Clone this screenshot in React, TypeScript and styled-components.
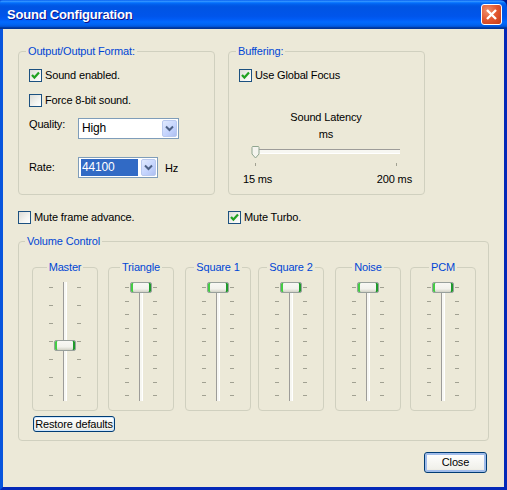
import React, { FC } from "react";
import styled, { createGlobalStyle } from "styled-components";

const GlobalStyle = createGlobalStyle`
  html, body {
    margin: 0;
    padding: 0;
    background: #fff;
    overflow: hidden;
  }
  body {
    font-family: "Liberation Sans", Tahoma, Arial, sans-serif;
    font-size: 11px;
    line-height: 13px;
    letter-spacing: -0.15px;
    color: #000;
  }
`;

const Window = styled.div`
  width: 507px;
  height: 490px;
  display: flex;
  flex-direction: column;
  box-sizing: border-box;
  background: linear-gradient(90deg, #0a55e0 0%, #0a55e0 60%, #00188c 100%);
`;

const TitleBar = styled.div`
  height: 29px;
  flex: none;
  display: flex;
  align-items: center;
  justify-content: space-between;
  padding: 0 5px 0 7px;
  border-radius: 3px 7px 0 0;
  background: linear-gradient(
    180deg,
    #0058ee 0%,
    #3593ff 4%,
    #288eff 6%,
    #127dff 8%,
    #036ffc 10%,
    #0262ee 14%,
    #0057e5 20%,
    #0054e3 24%,
    #0055eb 56%,
    #005bf5 66%,
    #026afe 76%,
    #0062ef 86%,
    #0052d6 92%,
    #0040ab 94%,
    #003092 100%
  );
`;

const TitleText = styled.span`
  font-size: 13px;
  font-weight: 700;
  letter-spacing: -0.2px;
  color: #fff;
  text-shadow: 1px 1px 0 #0f1089;
`;

const CloseBox = styled.div`
  width: 21px;
  height: 21px;
  box-sizing: border-box;
  display: flex;
  align-items: center;
  justify-content: center;
  border: 1px solid #fff;
  border-radius: 3px;
  background: radial-gradient(circle at 30% 30%, #f0906c 0%, #e2562f 50%, #c23a17 100%);
`;

const Client = styled.div`
  flex: 1;
  display: flex;
  flex-direction: column;
  box-sizing: border-box;
  padding: 16px 15px 0 15px;
  background: #ece9d8;
  border-left: 3px solid #0855dd;
  border-right: 3px solid #0428b8;
  border-bottom: 3px solid #0428b8;
`;

const TopRow = styled.div`
  display: flex;
  gap: 13px;
`;

const Group = styled.fieldset<{ $w: number; $h: number }>`
  margin: 0;
  min-width: 0;
  box-sizing: border-box;
  width: ${(p) => p.$w}px;
  height: ${(p) => p.$h}px;
  border: 1px solid #d0d0bf;
  border-radius: 4px;
  padding: 0;
`;

const Legend = styled.legend<{ $ml: number }>`
  margin-left: ${(p) => p.$ml}px;
  padding: 0 2px;
  color: #0046d5;
  line-height: 13px;
`;

const OutputBody = styled.div`
  display: flex;
  flex-direction: column;
  padding: 11px 0 0 10px;
`;

const CheckRow = styled.label<{ $mb?: number }>`
  display: flex;
  align-items: center;
  gap: 3px;
  height: 13px;
  margin-bottom: ${(p) => p.$mb ?? 0}px;
`;

const CheckBoxFrame = styled.span`
  width: 13px;
  height: 13px;
  flex: none;
  box-sizing: border-box;
  display: flex;
  align-items: center;
  justify-content: center;
  border: 1px solid #1c5180;
  background: linear-gradient(135deg, #dcdcd7 0%, #f4f4f0 60%, #fff 100%);
`;

const FormRow = styled.div<{ $h: number; $mb?: number }>`
  display: flex;
  height: ${(p) => p.$h}px;
  margin-bottom: ${(p) => p.$mb ?? 0}px;
`;

const FieldLabel = styled.span<{ $top: number }>`
  width: 49px;
  flex: none;
  padding-top: ${(p) => p.$top}px;
`;

const Select = styled.div<{ $w: number; $h: number }>`
  width: ${(p) => p.$w}px;
  height: ${(p) => p.$h}px;
  box-sizing: border-box;
  display: flex;
  align-items: center;
  justify-content: space-between;
  padding: 1px 1px 1px 2px;
  background: #fff;
  border: 1px solid #7f9db9;
`;

const SelectValue = styled.span<{ $selected?: boolean }>`
  flex: 1;
  height: 100%;
  display: flex;
  align-items: center;
  padding-left: 1px;
  margin-right: 3px;
  font-size: 12px;
  color: ${(p) => (p.$selected ? "#fff" : "#000")};
  background: ${(p) => (p.$selected ? "#316ac5" : "transparent")};
`;

const SelectArrow = styled.span`
  width: 15px;
  height: 100%;
  flex: none;
  display: flex;
  align-items: center;
  justify-content: center;
  border-radius: 2px;
  border: 1px solid #b9c9ef;
  box-sizing: border-box;
  background: linear-gradient(135deg, #e1eafe 0%, #c3d3fd 60%, #aebff0 100%);
`;

const Unit = styled.span`
  margin-left: 7px;
  padding-top: 5px;
`;

const BufferBody = styled.div`
  display: flex;
  flex-direction: column;
  padding: 11px 0 0 10px;
`;

const LatencyBlock = styled.div`
  display: flex;
  flex-direction: column;
  align-items: center;
  width: 176px;
  margin: 29px 0 0 -1px;
  gap: 4px;
`;

const HSlider = styled.div`
  position: relative;
  width: 176px;
  margin-top: 1px;
  padding: 3px 14px 0 15px;
  box-sizing: border-box;
`;

const HTrack = styled.div`
  height: 3px;
  background: #f7f7f2;
  border-top: 1px solid #9d9c99;
  border-bottom: 1px solid #fff;
`;

const HThumb = styled.svg`
  position: absolute;
  left: 13px;
  top: 0;
`;

const HTicks = styled.div`
  display: flex;
  justify-content: space-between;
  padding: 9px 3px 0 2px;
`;

const HTick = styled.span`
  width: 1px;
  height: 3px;
  background: #a1a192;
`;

const HLabels = styled.div`
  display: flex;
  justify-content: space-between;
  margin-top: 3px;
  width: 100%;
  box-sizing: border-box;
  padding: 0 2px 0 5px;
`;

const MuteRow = styled.div`
  display: flex;
  margin: 16px 0 11px 0;
`;

const MuteCell = styled.div<{ $w: number }>`
  width: ${(p) => p.$w}px;
  flex: none;
`;

const VolumeBody = styled.div`
  padding: 0 0 0 13px;
`;

const Channels = styled.div`
  display: grid;
  grid-template-columns: 76px 77px 73px 77px 75px 66px;
  margin-top: 13px;
`;

const ChannelBox = styled.fieldset`
  margin: 0;
  padding: 0;
  width: 66px;
  min-width: 0;
  box-sizing: border-box;
  height: 150px;
  border: 1px solid #d0d0bf;
  border-radius: 4px;
`;

const ChannelLegend = styled.legend`
  margin: 0 auto;
  padding: 0 2px;
  color: #0046d5;
`;

const SliderWrap = styled.div`
  display: flex;
  justify-content: center;
  gap: 10px;
  height: 119px;
  padding: 8px 0 0 0;
  position: relative;
`;

const TickColumn = styled.div`
  display: flex;
  flex-direction: column;
  justify-content: space-between;
  height: 109px;
  margin-top: 5px;
`;

const VTick = styled.span`
  width: 4px;
  height: 1px;
  background: #a1a192;
`;

const VTrack = styled.div`
  width: 4px;
  height: 119px;
  box-sizing: border-box;
  background: #f7f7f2;
  border-left: 1px solid #9d9c99;
  border-right: 1px solid #fff;
`;

const VThumb = styled.div<{ $top: number }>`
  position: absolute;
  left: 21px;
  top: ${(p) => p.$top}px;
  width: 22px;
  height: 11px;
  box-sizing: border-box;
  border: 1px solid #98a09c;
  border-radius: 2px;
  background: linear-gradient(180deg, #f8f8f4 0%, #f2f2ec 65%, #d2d2c6 100%);
  box-shadow: inset 2px 0 0 #44cc44, inset -2px 0 0 #1f9a2b;
`;

const RestoreButton = styled.button`
  display: block;
  margin: 5px 0 0 1px;
  width: 82px;
  height: 16px;
  padding: 0;
  font: inherit;
  letter-spacing: inherit;
  white-space: nowrap;
  color: #000;
  border: 1px solid #003c74;
  border-radius: 3px;
  background: linear-gradient(180deg, #fff 0%, #f0f0ea 85%, #dcd8c8 100%);
  box-shadow: inset 0 0 0 1px #cee7ff;
`;

const Footer = styled.div`
  display: flex;
  justify-content: flex-end;
  margin-top: 11px;
  padding-right: 2px;
`;

const CloseButton = styled.button`
  width: 63px;
  height: 21px;
  padding: 0;
  font: inherit;
  letter-spacing: inherit;
  color: #000;
  border: 1px solid #003c74;
  border-radius: 3px;
  background: linear-gradient(180deg, #fff 0%, #f0f0ea 85%, #dcd8c8 100%);
  box-shadow: inset 0 0 0 2px #a0bcea;
`;

const CheckBox: FC<{ label: string; checked?: boolean; mb?: number }> = ({ label, checked, mb }) => (
  <CheckRow $mb={mb}>
    <CheckBoxFrame>
      {checked && (
        <svg width="9" height="9" viewBox="0 0 9 9">
          <path d="M1 4 L3.4 6.6 L8 1.6" fill="none" stroke="#21a121" strokeWidth="2.2" />
        </svg>
      )}
    </CheckBoxFrame>
    {label}
  </CheckRow>
);

const Chevron: FC = () => (
  <svg width="9" height="7" viewBox="0 0 9 7">
    <path d="M1 1.5 L4.5 5 L8 1.5" fill="none" stroke="#4d6185" strokeWidth="2" />
  </svg>
);

const CHANNELS = [
  { name: "Master", ticks: 7, top: 66 },
  { name: "Triangle", ticks: 9, top: 8 },
  { name: "Square 1", ticks: 9, top: 8 },
  { name: "Square 2", ticks: 9, top: 8 },
  { name: "Noise", ticks: 9, top: 8 },
  { name: "PCM", ticks: 9, top: 8 },
];

const Ticks: FC<{ count: number }> = ({ count }) => (
  <TickColumn>
    {Array.from({ length: count }, (_, i) => (
      <VTick key={i} />
    ))}
  </TickColumn>
);

export default function App() {
  return (
    <>
      <GlobalStyle />
      <Window>
        <TitleBar>
          <TitleText>Sound Configuration</TitleText>
          <CloseBox>
            <svg width="13" height="13" viewBox="0 0 13 13">
              <path d="M2 2 L11 11 M11 2 L2 11" stroke="#fff" strokeWidth="2.4" />
            </svg>
          </CloseBox>
        </TitleBar>
        <Client>
          <TopRow>
            <Group $w={197} $h={150}>
              <Legend $ml={7}>Output/Output Format:</Legend>
              <OutputBody>
                <CheckBox label="Sound enabled." checked mb={12} />
                <CheckBox label="Force 8-bit sound." mb={11} />
                <FormRow $h={21} $mb={18}>
                  <FieldLabel $top={0}>Quality:</FieldLabel>
                  <Select $w={101} $h={21}>
                    <SelectValue>High</SelectValue>
                    <SelectArrow>
                      <Chevron />
                    </SelectArrow>
                  </Select>
                </FormRow>
                <FormRow $h={21}>
                  <FieldLabel $top={4}>Rate:</FieldLabel>
                  <Select $w={80} $h={21}>
                    <SelectValue $selected>44100</SelectValue>
                    <SelectArrow>
                      <Chevron />
                    </SelectArrow>
                  </Select>
                  <Unit>Hz</Unit>
                </FormRow>
              </OutputBody>
            </Group>
            <Group $w={197} $h={150}>
              <Legend $ml={7}>Buffering:</Legend>
              <BufferBody>
                <CheckBox label="Use Global Focus" checked />
                <LatencyBlock>
                  <span>Sound Latency</span>
                  <span>ms</span>
                  <HSlider>
                    <HTrack />
                    <HThumb width="9" height="13" viewBox="0 0 9 13">
                      <path
                        d="M1.5 .5 H7.5 L8 1.5 V8 L4.5 12 L1 8 V1.5 Z"
                        fill="#f4f4ee"
                        stroke="#8fa58f"
                      />
                    </HThumb>
                    <HTicks>
                      <HTick />
                      <HTick />
                    </HTicks>
                  </HSlider>
                  <HLabels>
                    <span>15 ms</span>
                    <span>200 ms</span>
                  </HLabels>
                </LatencyBlock>
              </BufferBody>
            </Group>
          </TopRow>
          <MuteRow>
            <MuteCell $w={210}>
              <CheckBox label="Mute frame advance." />
            </MuteCell>
            <MuteCell $w={200}>
              <CheckBox label="Mute Turbo." checked />
            </MuteCell>
          </MuteRow>
          <Group $w={471} $h={206}>
            <Legend $ml={6}>Volume Control</Legend>
            <VolumeBody>
              <Channels>
                {CHANNELS.map((c) => (
                  <ChannelBox key={c.name}>
                    <ChannelLegend>{c.name}</ChannelLegend>
                    <SliderWrap>
                      <Ticks count={c.ticks} />
                      <VTrack />
                      <Ticks count={c.ticks} />
                      <VThumb $top={c.top} />
                    </SliderWrap>
                  </ChannelBox>
                ))}
              </Channels>
              <RestoreButton>Restore defaults</RestoreButton>
            </VolumeBody>
          </Group>
          <Footer>
            <CloseButton>Close</CloseButton>
          </Footer>
        </Client>
      </Window>
    </>
  );
}
